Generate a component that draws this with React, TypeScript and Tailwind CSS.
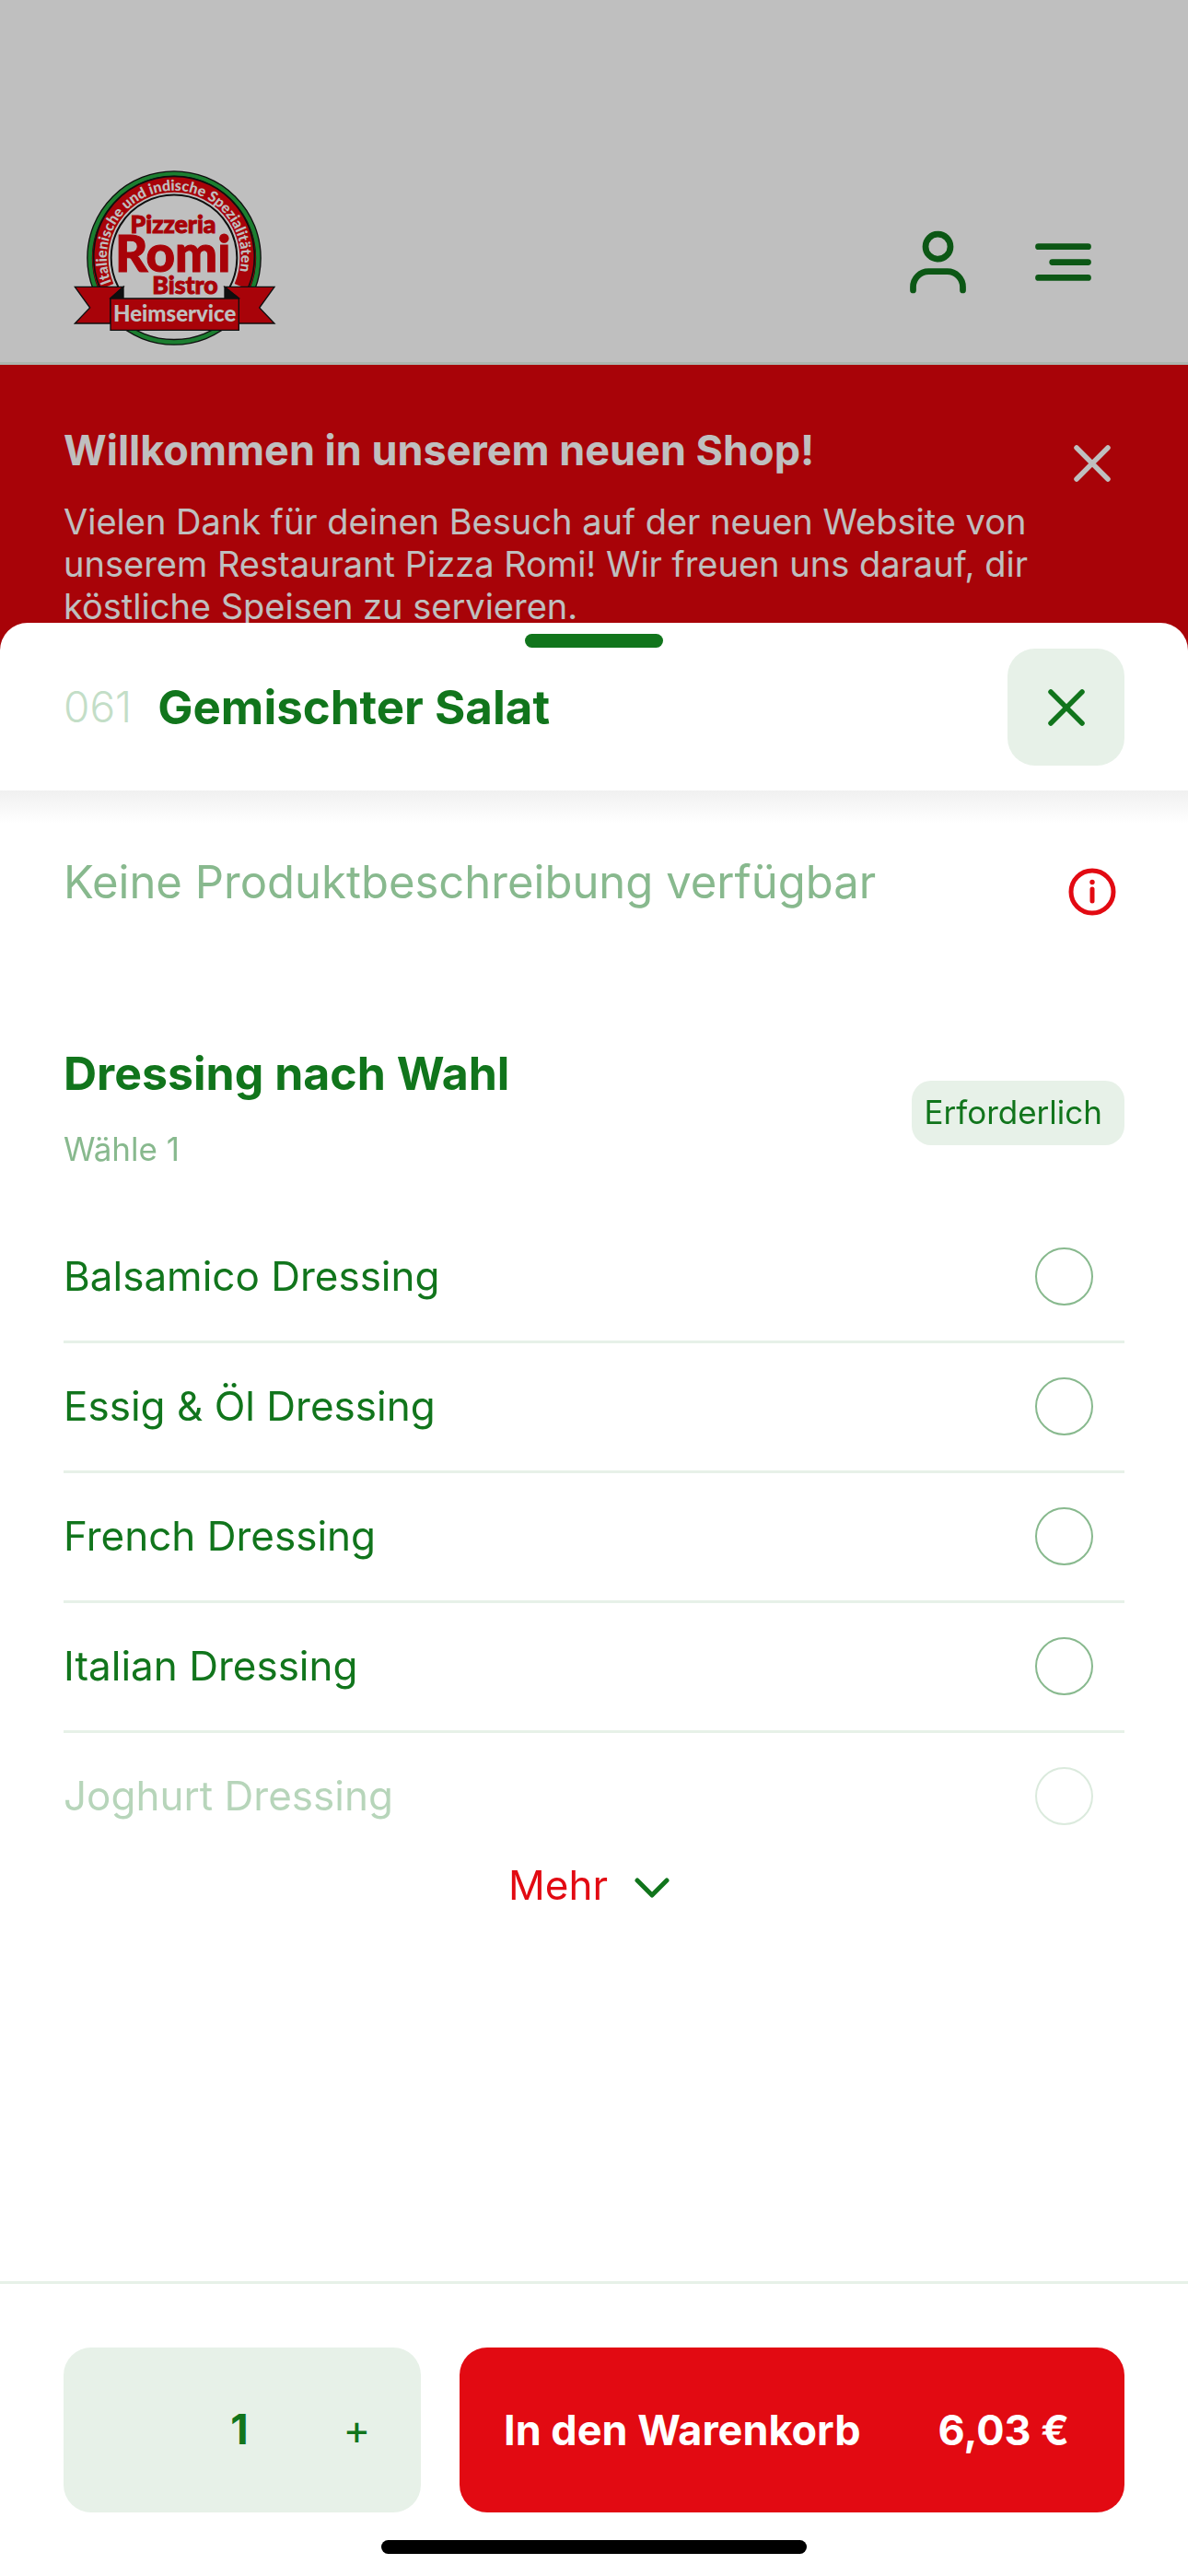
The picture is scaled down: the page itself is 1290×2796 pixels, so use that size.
import { useState } from "react";

const dressings = [
  "Balsamico Dressing",
  "Essig & Öl Dressing",
  "French Dressing",
  "Italian Dressing",
  "Joghurt Dressing",
];

function Logo() {
  return (
    <svg
      viewBox="27 30 720 627"
      className="w-[240px] h-[209px]"
      role="img"
      aria-label="Pizzeria Romi Bistro Heimservice"
    >
      <circle cx="387" cy="330" r="274" fill="none" stroke="#141414" strokeWidth="21" />
      <circle cx="387" cy="330" r="274" fill="none" stroke="#26a840" strokeWidth="13" />
      <path
        d="M166 424A240 240 0 1 1 608 424"
        fill="none"
        stroke="#e0040c"
        strokeWidth="52"
      />
      <path
        d="M144 424A262 262 0 1 1 630 424"
        fill="none"
        stroke="#141414"
        strokeWidth="5"
      />
      <path
        d="M205 424A205 205 0 1 1 569 424"
        fill="none"
        stroke="#141414"
        strokeWidth="6"
      />
      <path id="ring" d="M183 410A219 219 0 1 1 583 426" fill="none" />
      <text
        className="font-['Lato',sans-serif] font-black"
        fontSize="48"
        fill="#fff"
      >
        <textPath href="#ring">Italienische und indische Spezialitäten</textPath>
      </text>
      <g
        className="font-['Lato',sans-serif] font-black"
        fill="#e0040c"
        stroke="#e0040c"
        strokeWidth="3"
        textAnchor="middle"
      >
        <text x="384" y="248" fontSize="80">Pizzeria</text>
        <text x="383" y="376" fontSize="164">Romi</text>
        <text x="423" y="448" fontSize="80">Bistro</text>
      </g>
      <g stroke="#141414" strokeWidth="4">
        <path d="M64 424H222L180 462V543H64L113 492Z" fill="#e0040c" />
        <path d="M714 424H552L598 462V543H714L665 492Z" fill="#e0040c" />
        <path d="M222 424V461H180Z" fill="#141414" />
        <path d="M552 424V461H598Z" fill="#141414" />
        <path d="M180 462H598V565H180Z" fill="#e0040c" />
      </g>
      <text
        x="389"
        y="536"
        fontSize="72"
        textAnchor="middle"
        fill="#fff"
        className="font-['Lato',sans-serif] font-black"
      >
        Heimservice
      </text>
    </svg>
  );
}

function UserIcon() {
  return (
    <svg
      viewBox="0 0 24 24"
      className="size-[81px]"
      fill="none"
      stroke="currentColor"
      strokeWidth="2"
      strokeLinecap="round"
    >
      <circle cx="12" cy="7" r="4" />
      <path d="M4 21v-1a5 5 0 0 1 5-5h6a5 5 0 0 1 5 5v1" />
    </svg>
  );
}

function MenuIcon() {
  return (
    <svg
      viewBox="0 0 24 24"
      className="size-[81px]"
      fill="none"
      stroke="currentColor"
      strokeWidth="2"
      strokeLinecap="round"
    >
      <path d="M4 7h16M8.500 12H20M4 17h16" />
    </svg>
  );
}

function CloseIcon() {
  return (
    <svg
      viewBox="0 0 40 40"
      className="size-10"
      fill="none"
      stroke="currentColor"
      strokeWidth="5.500"
      strokeLinecap="round"
    >
      <path d="M3 3l34 34M37 3L3 37" />
    </svg>
  );
}

function InfoIcon() {
  return (
    <svg viewBox="0 0 52 52" className="size-13" fill="none" stroke="currentColor">
      <circle cx="26" cy="26" r="23" strokeWidth="5" />
      <path d="M26 23v13" strokeWidth="5" strokeLinecap="round" />
      <circle cx="26" cy="15.500" r="2.700" fill="currentColor" stroke="none" />
    </svg>
  );
}

function ChevronIcon() {
  return (
    <svg
      viewBox="0 0 40 24"
      className="w-10 h-6"
      fill="none"
      stroke="currentColor"
      strokeWidth="5"
      strokeLinecap="round"
      strokeLinejoin="round"
    >
      <path d="M4 5l16 16L36 5" />
    </svg>
  );
}

export default function App() {
  const [quantity, setQuantity] = useState(1);
  const [selected, setSelected] = useState("");

  return (
    <div className="min-h-screen bg-white font-['Inter',sans-serif] text-[#11751c]">
      {/* Shop page */}
      <header className="flex items-center justify-between border-b-3 border-[#e7f1e8] pt-[180px] pb-1 pl-[69px] pr-[95px]">
        <a href="#">
          <Logo />
        </a>
        <nav className="flex gap-[55px]">
          <button aria-label="Konto">
            <UserIcon />
          </button>
          <button aria-label="Menü">
            <MenuIcon />
          </button>
        </nav>
      </header>
      <section className="flex items-start justify-between bg-[#e1040b] pt-[63px] pb-16 pl-[69px] pr-[84px] text-white">
        <div className="max-w-[1070px]">
          <h2 className="text-[45px] leading-[60px] font-bold">
            Willkommen in unserem neuen Shop!
          </h2>
          <p className="mt-6 text-[38px] leading-[46px]">
            Vielen Dank für deinen Besuch auf der neuen Website von unserem
            Restaurant Pizza Romi! Wir freuen uns darauf, dir köstliche Speisen
            zu servieren.
          </p>
        </div>
        <button aria-label="Hinweis schließen" className="mt-6">
          <CloseIcon />
        </button>
      </section>

      {/* Backdrop */}
      <div className="fixed inset-0 bg-black/25" />

      {/* Product sheet */}
      <div
        role="dialog"
        aria-labelledby="product-title"
        className="fixed inset-x-0 top-[676px] bottom-0 flex flex-col rounded-t-[30px] bg-white"
      >
        <div className="absolute top-3 left-1/2 h-[15px] w-[150px] -translate-x-1/2 rounded-full bg-[#11751c]" />

        <div className="flex items-center justify-between rounded-t-[30px] px-[69px] pt-7 pb-[27px]">
          <div className="flex items-center gap-7">
            <span className="text-[46px] font-light text-[#c3dec7]">061</span>
            <h1 id="product-title" className="text-[51px] leading-[60px] font-bold">
              Gemischter Salat
            </h1>
          </div>
          <button
            aria-label="Schließen"
            className="flex size-[127px] items-center justify-center rounded-[30px] bg-[#e7f1e8]"
          >
            <CloseIcon />
          </button>
        </div>

        <div className="h-9 bg-linear-to-b from-[#f0f0f0] to-white" />

        <main className="flex flex-1 flex-col px-[69px] pt-[34px]">
          <div className="flex items-start justify-between">
            <p className="text-[49px] leading-[60px] text-[#88b98e]">
              Keine Produktbeschreibung verfügbar
            </p>
            <button
              aria-label="Produktinformationen"
              className="flex h-[79px] w-[70px] items-center justify-center text-[#e20a12]"
            >
              <InfoIcon />
            </button>
          </div>

          <fieldset className="mt-32">
            <div className="flex items-center justify-between">
              <div className="pb-3">
                <h2 className="text-[50px] leading-[60px] font-bold">
                  Dressing nach Wahl
                </h2>
                <p className="mt-[30px] text-[35px] leading-[44px] text-[#88b98e]">
                  Wähle 1
                </p>
              </div>
              <span className="rounded-[21px] bg-[#e7f1e8] pt-3 pb-3.5 pl-3.5 pr-6 text-[35px] leading-[44px]">
                Erforderlich
              </span>
            </div>

            <div className="mt-9">
              {dressings.map((name) => (
                <label
                  key={name}
                  className="flex h-[141px] items-center justify-between border-b-3 border-[#e7f1e8] pr-[34px] pb-0.5 text-[44px] last:h-[138px] last:border-b-0 last:opacity-30"
                >
                  {name}
                  <input
                    type="radio"
                    name="dressing"
                    checked={selected === name}
                    onChange={() => setSelected(name)}
                    className="size-[63px] appearance-none rounded-full border-2 border-[#88b98e] checked:border-[18px] checked:border-[#11751c]"
                  />
                </label>
              ))}
            </div>
          </fieldset>

          <button className="flex items-center gap-7 self-center pr-2.5 text-[44px] leading-[54px] text-[#e20a12]">
            Mehr
            <span className="pt-1 text-[#11751c]">
              <ChevronIcon />
            </span>
          </button>
        </main>

        <footer className="border-t-3 border-[#e7f1e8] px-[69px] pt-[69px] pb-6">
          <div className="flex h-[179px] gap-[42px]">
            <div className="grid w-[388px] grid-cols-3 items-center rounded-[30px] bg-[#e7f1e8] pr-1.5 pb-0.5 text-center text-[45px]">
              <button
                aria-label="Weniger"
                disabled={quantity === 1}
                onClick={() => setQuantity(quantity - 1)}
              >
                {quantity > 1 && "−"}
              </button>
              <span className="font-bold">{quantity}</span>
              <button aria-label="Mehr hinzufügen" onClick={() => setQuantity(quantity + 1)}>
                +
              </button>
            </div>
            <button className="flex flex-1 items-center justify-between rounded-[30px] bg-[#e20a12] pl-12 pr-[60px] text-[45px] font-bold text-white">
              <span>In den Warenkorb</span>
              <span>6,03 €</span>
            </button>
          </div>
          <div className="mx-auto mt-[30px] h-[15px] w-[462px] rounded-full bg-black" />
        </footer>
      </div>
    </div>
  );
}
